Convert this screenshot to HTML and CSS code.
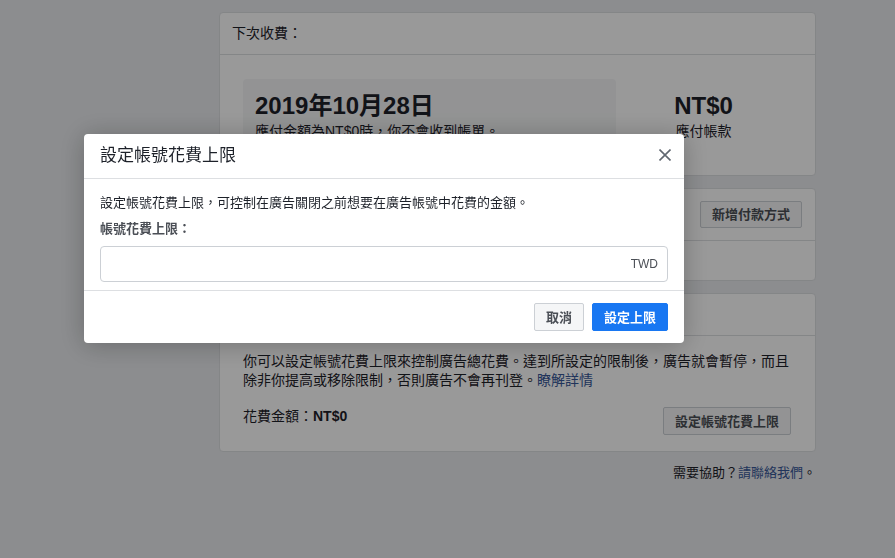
FILE: index.html
```html
<!DOCTYPE html>
<html lang="zh-Hant">
<head>
<meta charset="utf-8">
<title>設定帳號花費上限</title>
<link rel="stylesheet" href="styles.css">
</head>
<body>
<main class="page">
  <section class="card">
    <header class="card-head">下次收費：</header>
    <div class="card-body billing">
      <div class="date-box">
        <div class="big">2019年10月28日</div>
        <div class="sub">應付金額為NT$0時，你不會收到帳單。</div>
      </div>
      <div class="due">
        <div class="big">NT$0</div>
        <div class="sub">應付帳款</div>
      </div>
    </div>
  </section>

  <section class="card">
    <header class="card-head row-head">
      <span>付款方式</span>
      <button class="btn">新增付款方式</button>
    </header>
    <div class="card-row"></div>
  </section>

  <section class="card">
    <header class="card-head">帳號花費上限</header>
    <div class="card-body limit">
      <p class="limit-text">你可以設定帳號花費上限來控制廣告總花費。達到所設定的限制後，廣告就會暫停，而且除非你提高或移除限制，否則廣告不會再刊登。<a class="link" href="#">瞭解詳情</a></p>
      <div class="limit-row">
        <span>花費金額：<b>NT$0</b></span>
        <button class="btn">設定帳號花費上限</button>
      </div>
    </div>
  </section>

  <p class="help">需要協助？<a class="link" href="#">請聯絡我們</a>。</p>
</main>

<div class="overlay">
  <div class="modal" role="dialog">
    <div class="modal-head">
      <h2 class="modal-title">設定帳號花費上限</h2>
      <button class="close" aria-label="關閉">
        <svg width="12" height="12" viewBox="0 0 12 12"><path d="M0.5 0.5 L11.5 11.5 M11.5 0.5 L0.5 11.5" stroke="#606770" stroke-width="1.6" fill="none"/></svg>
      </button>
    </div>
    <div class="modal-body">
      <p class="desc">設定帳號花費上限，可控制在廣告關閉之前想要在廣告帳號中花費的金額。</p>
      <label class="field-label" for="cap">帳號花費上限：</label>
      <div class="field">
        <input id="cap" class="field-input" type="text">
        <span class="suffix">TWD</span>
      </div>
    </div>
    <div class="modal-foot">
      <button class="btn">取消</button>
      <button class="btn primary">設定上限</button>
    </div>
  </div>
</div>
</body>
</html>
```

FILE: styles.css
```css
* { box-sizing: border-box; }

body {
  margin: 0;
  background: #e9ebee;
  font-family: "Liberation Sans", "Noto Sans CJK TC", sans-serif;
  color: #1d2129;
  font-size: 14px;
}

.page {
  width: 597px;
  margin-left: 219px;
  padding-top: 12px;
}

.card {
  background: #fff;
  border: 1px solid #dddfe2;
  border-radius: 4px;
  margin-bottom: 12px;
}

.card-head {
  padding: 12px;
  line-height: 17px;
  font-size: 14px;
  border-bottom: 1px solid #dddfe2;
}

.row-head {
  display: flex;
  justify-content: space-between;
  align-items: center;
  padding-right: 13px;
}

.card-row { height: 39px; }

.card-body { padding: 24px 24px 24px 23px; }

.billing { display: flex; }

.date-box {
  width: 373px;
  background: #f5f6f7;
  border-radius: 4px;
  padding: 13px 12px 10px;
}

.due {
  flex: 1;
  text-align: center;
  padding-top: 13px;
}

.big {
  font-size: 24px;
  font-weight: bold;
  line-height: 28px;
}

.sub {
  margin-top: 1px;
  font-size: 14px;
  line-height: 20px;
}

.limit { padding: 16px 24px 16px 23px; }

.limit-text {
  margin: 0;
  font-size: 14px;
  line-height: 19px;
}

.limit-row {
  margin-top: 17px;
  display: flex;
  justify-content: space-between;
  align-items: flex-start;
  line-height: 19px;
}

.link {
  color: #385898;
  text-decoration: none;
}

.help {
  margin: 10px 0 0;
  text-align: right;
  font-size: 13px;
  line-height: 18px;
}

.btn {
  height: 27px;
  padding: 0 11px;
  font-family: inherit;
  font-size: 13px;
  font-weight: bold;
  color: #4b4f56;
  background: #f5f6f7;
  border: 1px solid #ccd0d5;
  border-radius: 2px;
  line-height: 1;
}

.limit-row .btn { height: 28px; }

/* overlay + modal */
.overlay {
  position: fixed;
  inset: 0;
  background: rgba(0, 0, 0, 0.4);
  padding: 134px 0 0 84px;
}

.modal {
  width: 600px;
  background: #fff;
  border-radius: 4px;
  box-shadow: 0 2px 26px rgba(0, 0, 0, 0.25);
}

.modal-head {
  display: flex;
  justify-content: space-between;
  align-items: center;
  padding: 12px 13px 12px 16px;
  border-bottom: 1px solid #dddfe2;
}

.modal-title {
  margin: 0;
  font-size: 17px;
  font-weight: normal;
  line-height: 20px;
  color: #1d2129;
}

.close {
  width: 12px;
  height: 12px;
  padding: 0;
  border: 0;
  background: none;
  display: flex;
  margin-top: -2px;
}

.modal-body { padding: 16px 16px 8px; }

.desc {
  margin: 0 0 10px;
  font-size: 13px;
  line-height: 16px;
}

.field-label {
  display: block;
  margin-bottom: 9px;
  font-size: 13px;
  line-height: 16px;
  font-weight: bold;
  color: #4b4f56;
}

.field {
  display: flex;
  align-items: center;
  height: 36px;
  border: 1px solid #ccd0d5;
  border-radius: 4px;
  padding: 0 9px 0 8px;
}

.field-input {
  flex: 1;
  border: 0;
  outline: none;
  font-family: inherit;
  font-size: 13px;
  background: transparent;
}

.suffix {
  font-size: 12px;
  color: #4b4f56;
}

.modal-foot {
  display: flex;
  justify-content: flex-end;
  gap: 8px;
  padding: 12px 16px;
  border-top: 1px solid #dddfe2;
}

.modal-foot .btn { height: 28px; }

.btn.primary {
  background: #1877f2;
  border-color: #1877f2;
  color: #fff;
}
```
